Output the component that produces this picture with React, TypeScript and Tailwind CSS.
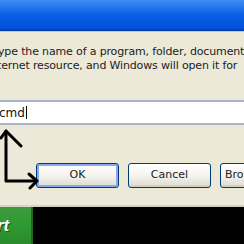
import React from 'react';

const font = { fontFamily: 'Tahoma, "DejaVu Sans", "Liberation Sans", sans-serif' };

const XpButton: React.FC<{ label: string; focused?: boolean; className?: string }> = ({ label, focused, className }) => (
  <div
    className={
      'h-[25px] w-[83px] shrink-0 rounded-[3px] border border-[#003c74] bg-gradient-to-b from-[#ffffff] via-[#f5f4ee] to-[#dcdad0] flex items-center justify-center text-[11px] text-[#222] ' +
      (focused ? 'shadow-[inset_0_0_0_2px_#8aa9ec] ' : 'shadow-[inset_0_-2px_0_#d6d0c0] ') +
      (className ?? '')
    }
  >
    {label}
  </div>
);

export default function App() {
  return (
    <div className="w-[244px] h-[244px] overflow-hidden flex flex-col bg-[#ece9d8]" style={font}>
      {/* title bar */}
      <div className="h-[31px] shrink-0 bg-gradient-to-b from-[#3f8cf3] via-[#0a5ee8] to-[#0350d8] border-b-2 border-[#0a3fae]" />
      <div className="h-px bg-[#b9c6e8]" />

      {/* dialog body */}
      <div className="relative flex-1 flex flex-col">
        <div className="pt-[13px] text-[11px] leading-[14px] text-[#222] whitespace-nowrap tracking-[-0.15px]">
          <div className="-ml-[2px]">ype the name of a program, folder, document</div>
          <div className="-ml-[3px]">ternet resource, and Windows will open it for</div>
        </div>

        <div className="mt-[27px] h-[25px] border-y-2 border-[#a9b4c8] bg-white flex items-center text-[12px] text-[#111]">
          <span className="-ml-[1px]">cmd</span>
          <span className="ml-px h-[13px] w-px bg-black" />
        </div>

        <div className="mt-[38px] flex gap-[9px] pl-[36px]">
          <XpButton label="OK" focused />
          <XpButton label="Cancel" />
          <XpButton label="Browse..." className="justify-start pl-[4px]" />
        </div>

        {/* hand-drawn arrow annotation */}
        <svg className="absolute left-0 top-[96px]" width="44" height="62" viewBox="0 0 44 62">
          <g stroke="#000" strokeWidth="3" fill="none" strokeLinecap="round" strokeLinejoin="round">
            <path d="M6 3 L6 53 L36 53" />
            <path d="M1 10 L6 3 L21 18" />
            <path d="M29 46 L37 53 L30 60" />
          </g>
        </svg>
      </div>

      {/* taskbar */}
      <div className="h-[2px] shrink-0 bg-[#d7d3c4]" />
      <div className="h-[37px] shrink-0 bg-black flex">
        <div className="w-[33px] h-full bg-gradient-to-b from-[#3d9b3d] via-[#2f9a31] to-[#2a8a2c] border-r-2 border-[#1f6a20] flex items-center">
          <span className="-ml-[3px] text-white font-bold italic text-[17px]" style={{ fontFamily: '"Liberation Sans", sans-serif', textShadow: '1px 1px 1px #1a4a1a' }}>
            rt
          </span>
        </div>
      </div>
    </div>
  );
}
